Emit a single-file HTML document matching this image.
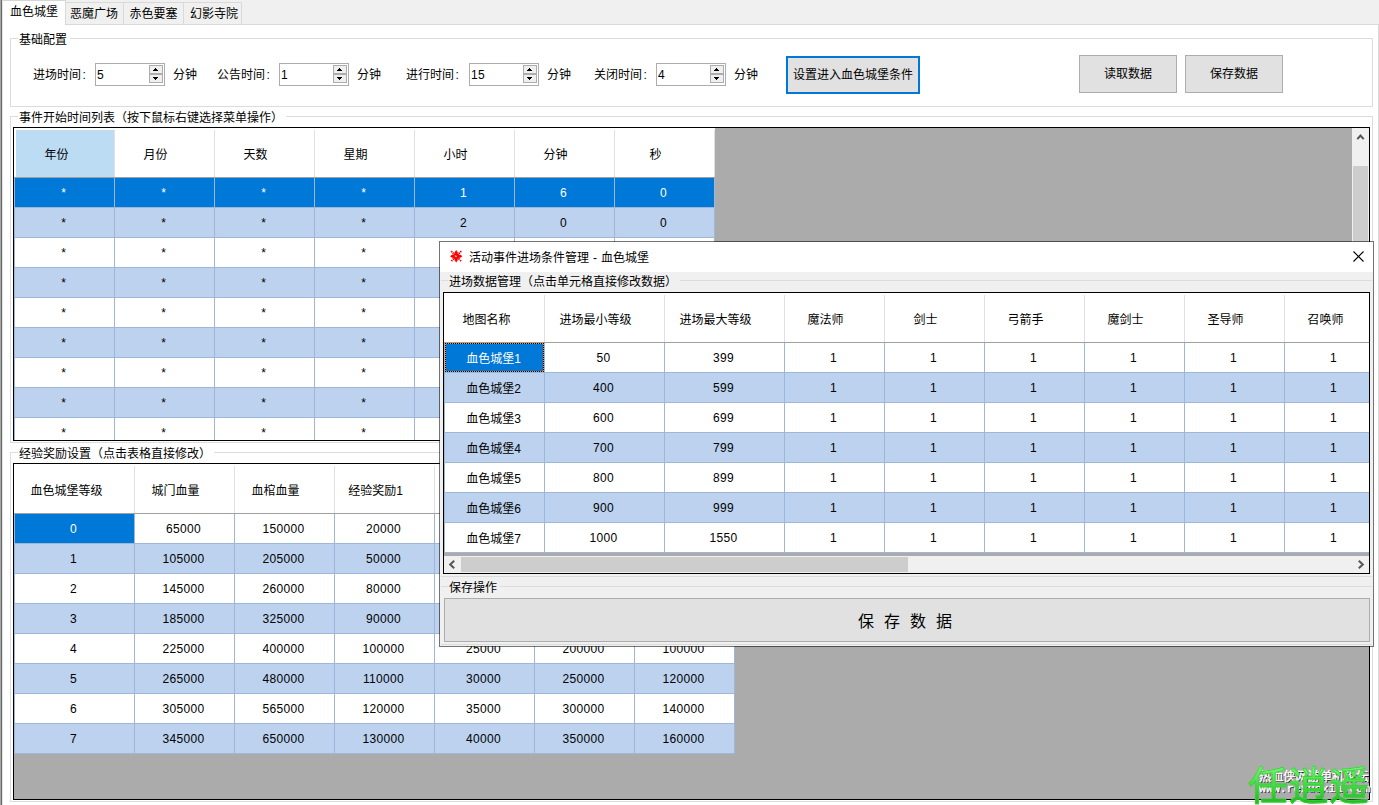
<!DOCTYPE html>
<html lang="zh-CN">
<head>
<meta charset="utf-8">
<title>活动事件配置</title>
<style>
html,body{margin:0;padding:0}
body{width:1379px;height:805px;overflow:hidden;position:relative;background:#fff;font-family:"Liberation Sans","Noto Sans CJK SC",sans-serif;font-size:12px;color:#000;line-height:16px}
.n{letter-spacing:.3px}
div,span{box-sizing:border-box}
.abs{position:absolute}
#edge0{position:absolute;left:0;top:0;width:1px;height:805px;background:#a6a6a6}
#edge1{position:absolute;left:1px;top:0;width:1px;height:805px;background:#696969}
#edge2{position:absolute;left:2px;top:0;width:1px;height:805px;background:#e3e3e3}
#strip{position:absolute;left:3px;top:0;width:1376px;height:24px;background:#f0f0f0}
#pageline{position:absolute;left:3px;top:24px;width:1376px;height:1px;background:#d9d9d9}
#pageright{position:absolute;left:1378px;top:24px;width:1px;height:781px;background:#d9d9d9}
.tab{position:absolute;top:2px;height:23px;background:#f0f0f0;border:1px solid #d9d9d9;border-right:none;text-align:left;line-height:22px;white-space:nowrap}
.tab.last{border-right:1px solid #d9d9d9}
.tab.act{top:0;height:25px;background:#fff;border:none;border-top:1px solid #d5d5d5;border-right:1px solid #d9d9d9;line-height:22px;z-index:2}
.gb{position:absolute;border:1px solid #dcdcdc}
.gbl{position:absolute;background:#fff;white-space:nowrap;height:14px;line-height:14px;padding:0 3px 0 1px}
.lbl{position:absolute;white-space:nowrap;height:16px;line-height:16px}
.cl{margin-left:1.5px}
.nud{position:absolute;top:63px;width:70px;height:23px;border:1px solid #abadb3;background:#fff}
.nud .v{position:absolute;left:1px;top:4px;line-height:14px}
.nud .sb{position:absolute;left:53px;width:14px;height:9px;background:#efefef;border:1px solid #adadad;display:block}
.nud .sb svg{position:absolute;left:3px;top:2px;display:block}
.nud .up{top:1px}
.nud .dn{top:10px}
.nud .dn svg{top:2px}
.btn{position:absolute;background:#e1e1e1;border:1px solid #adadad;text-align:center;white-space:nowrap}
.btn.foc{border:2px solid #0078d7}
.dg{position:absolute;border:1px solid #000;background:#ababab;overflow:hidden;box-sizing:content-box}
.dg .hd{position:absolute;left:0;top:0;height:49px;background:#fff}
.dg .hc{position:absolute;top:2px;height:47px;border-right:1px solid #e0e0e0;text-align:center;line-height:50px;white-space:nowrap;padding-right:18px}
.dg .hc.f{padding-right:16px}
.dg .lg{position:absolute;left:0;top:50px;width:1px;background:#a0b6d6}
.dg .hc.hb{background:none}
.dg .hc.hb::before{content:"";position:absolute;left:1px;top:0;right:0;bottom:0;background:#bcdcf4}
.dg .hc span{position:relative}
.dg .hd::after{content:"";position:absolute;left:0;right:0;bottom:-1px;height:1px;background:#a0a0a0}
.dg .rw{position:absolute;left:0;height:30px;background:#fff;border-bottom:1px solid #a0b6d6}
.dg .rw.alt{background:#bcd2ee}
.dg .rw.sel{background:#0078d7;color:#fff}
.dg .c{position:absolute;top:0;height:29px;border-right:1px solid #a0b6d6;text-align:center;line-height:30px;white-space:nowrap;padding-right:2px}
.dg .c.k{line-height:32px}
.dg .c.csel{background:#0078d7;color:#fff}
.dg .c.foc{box-shadow:inset 0 0 0 1px #ff8728}
.dg .c.foc::after{content:"";position:absolute;left:0;top:0;right:0;bottom:0;border:1px dotted #000}
</style>
</head>
<body>
<div id="edge0"></div><div id="edge1"></div><div id="edge2"></div>
<div id="strip"></div>
<div id="pageline"></div>
<div id="pageright"></div>
<div class="tab act" style="left:3px;width:63px;padding-left:7px">血色城堡</div>
<div class="tab" style="left:65px;width:59px;padding-left:4px">恶魔广场</div>
<div class="tab" style="left:123px;width:61px;padding-left:5.5px">赤色要塞</div>
<div class="tab last" style="left:183px;width:59px;padding-left:6px">幻影寺院</div>

<!-- group 1 -->
<div class="gb" style="left:10px;top:38px;width:1363px;height:69px"></div>
<div class="gbl" style="left:18px;top:33px">基础配置</div>
<div class="lbl" style="left:33px;top:67px">进场时间<span class="cl">:</span></div>
<div class="nud" style="left:95px"><span class="v n">5</span><span class="sb up"><svg width="5" height="3" viewBox="0 0 5 3" shape-rendering="crispEdges"><path d="M2 0h1v1h1v1h1v1h-5v-1h1v-1h1z" fill="#000"/></svg></span><span class="sb dn"><svg width="5" height="3" viewBox="0 0 5 3" shape-rendering="crispEdges"><path d="M0 0h5v1h-1v1h-1v1h-1v-1h-1v-1h-1z" fill="#000"/></svg></span></div>
<div class="lbl" style="left:173px;top:67px">分钟</div>
<div class="lbl" style="left:217px;top:67px">公告时间<span class="cl">:</span></div>
<div class="nud" style="left:279px"><span class="v n">1</span><span class="sb up"><svg width="5" height="3" viewBox="0 0 5 3" shape-rendering="crispEdges"><path d="M2 0h1v1h1v1h1v1h-5v-1h1v-1h1z" fill="#000"/></svg></span><span class="sb dn"><svg width="5" height="3" viewBox="0 0 5 3" shape-rendering="crispEdges"><path d="M0 0h5v1h-1v1h-1v1h-1v-1h-1v-1h-1z" fill="#000"/></svg></span></div>
<div class="lbl" style="left:357px;top:67px">分钟</div>
<div class="lbl" style="left:406px;top:67px">进行时间<span class="cl">:</span></div>
<div class="nud" style="left:469px"><span class="v n">15</span><span class="sb up"><svg width="5" height="3" viewBox="0 0 5 3" shape-rendering="crispEdges"><path d="M2 0h1v1h1v1h1v1h-5v-1h1v-1h1z" fill="#000"/></svg></span><span class="sb dn"><svg width="5" height="3" viewBox="0 0 5 3" shape-rendering="crispEdges"><path d="M0 0h5v1h-1v1h-1v1h-1v-1h-1v-1h-1z" fill="#000"/></svg></span></div>
<div class="lbl" style="left:547px;top:67px">分钟</div>
<div class="lbl" style="left:594px;top:67px">关闭时间<span class="cl">:</span></div>
<div class="nud" style="left:656px"><span class="v n">4</span><span class="sb up"><svg width="5" height="3" viewBox="0 0 5 3" shape-rendering="crispEdges"><path d="M2 0h1v1h1v1h1v1h-5v-1h1v-1h1z" fill="#000"/></svg></span><span class="sb dn"><svg width="5" height="3" viewBox="0 0 5 3" shape-rendering="crispEdges"><path d="M0 0h5v1h-1v1h-1v1h-1v-1h-1v-1h-1z" fill="#000"/></svg></span></div>
<div class="lbl" style="left:734px;top:67px">分钟</div>
<div class="btn foc" style="left:786px;top:56px;width:134px;height:38px;line-height:35px">设置进入血色城堡条件</div>
<div class="btn" style="left:1079px;top:55px;width:98px;height:38px;line-height:37px">读取数据</div>
<div class="btn" style="left:1185px;top:55px;width:98px;height:38px;line-height:37px">保存数据</div>

<!-- group 2 -->
<div class="gb" style="left:10px;top:116px;width:1363px;height:327px"></div>
<div class="gbl" style="left:18px;top:111px">事件开始时间列表（按下鼠标右键选择菜单操作）</div>
<div class="dg" id="ev" style="left:13px;top:127px;width:1355px;height:312px">
<div class="hd" style="width:701px">
<div class="hc f hb" style="left:1px;width:100px"><span>年份</span></div>
<div class="hc" style="left:101px;width:100px"><span>月份</span></div>
<div class="hc" style="left:201px;width:100px"><span>天数</span></div>
<div class="hc" style="left:301px;width:100px"><span>星期</span></div>
<div class="hc" style="left:401px;width:100px"><span>小时</span></div>
<div class="hc" style="left:501px;width:100px"><span>分钟</span></div>
<div class="hc" style="left:601px;width:100px"><span>秒</span></div>
</div>
<div class="rw sel" style="top:50px;width:701px">
<div class="c" style="left:1px;width:100px">*</div>
<div class="c" style="left:101px;width:100px">*</div>
<div class="c" style="left:201px;width:100px">*</div>
<div class="c" style="left:301px;width:100px">*</div>
<div class="c n" style="left:401px;width:100px">1</div>
<div class="c n" style="left:501px;width:100px">6</div>
<div class="c n" style="left:601px;width:100px">0</div>
</div>
<div class="rw alt" style="top:80px;width:701px">
<div class="c" style="left:1px;width:100px">*</div>
<div class="c" style="left:101px;width:100px">*</div>
<div class="c" style="left:201px;width:100px">*</div>
<div class="c" style="left:301px;width:100px">*</div>
<div class="c n" style="left:401px;width:100px">2</div>
<div class="c n" style="left:501px;width:100px">0</div>
<div class="c n" style="left:601px;width:100px">0</div>
</div>
<div class="rw" style="top:110px;width:701px">
<div class="c" style="left:1px;width:100px">*</div>
<div class="c" style="left:101px;width:100px">*</div>
<div class="c" style="left:201px;width:100px">*</div>
<div class="c" style="left:301px;width:100px">*</div>
<div class="c n" style="left:401px;width:100px">4</div>
<div class="c n" style="left:501px;width:100px">0</div>
<div class="c n" style="left:601px;width:100px">0</div>
</div>
<div class="rw alt" style="top:140px;width:701px">
<div class="c" style="left:1px;width:100px">*</div>
<div class="c" style="left:101px;width:100px">*</div>
<div class="c" style="left:201px;width:100px">*</div>
<div class="c" style="left:301px;width:100px">*</div>
<div class="c n" style="left:401px;width:100px">6</div>
<div class="c n" style="left:501px;width:100px">0</div>
<div class="c n" style="left:601px;width:100px">0</div>
</div>
<div class="rw" style="top:170px;width:701px">
<div class="c" style="left:1px;width:100px">*</div>
<div class="c" style="left:101px;width:100px">*</div>
<div class="c" style="left:201px;width:100px">*</div>
<div class="c" style="left:301px;width:100px">*</div>
<div class="c n" style="left:401px;width:100px">8</div>
<div class="c n" style="left:501px;width:100px">0</div>
<div class="c n" style="left:601px;width:100px">0</div>
</div>
<div class="rw alt" style="top:200px;width:701px">
<div class="c" style="left:1px;width:100px">*</div>
<div class="c" style="left:101px;width:100px">*</div>
<div class="c" style="left:201px;width:100px">*</div>
<div class="c" style="left:301px;width:100px">*</div>
<div class="c n" style="left:401px;width:100px">10</div>
<div class="c n" style="left:501px;width:100px">0</div>
<div class="c n" style="left:601px;width:100px">0</div>
</div>
<div class="rw" style="top:230px;width:701px">
<div class="c" style="left:1px;width:100px">*</div>
<div class="c" style="left:101px;width:100px">*</div>
<div class="c" style="left:201px;width:100px">*</div>
<div class="c" style="left:301px;width:100px">*</div>
<div class="c n" style="left:401px;width:100px">12</div>
<div class="c n" style="left:501px;width:100px">0</div>
<div class="c n" style="left:601px;width:100px">0</div>
</div>
<div class="rw alt" style="top:260px;width:701px">
<div class="c" style="left:1px;width:100px">*</div>
<div class="c" style="left:101px;width:100px">*</div>
<div class="c" style="left:201px;width:100px">*</div>
<div class="c" style="left:301px;width:100px">*</div>
<div class="c n" style="left:401px;width:100px">14</div>
<div class="c n" style="left:501px;width:100px">0</div>
<div class="c n" style="left:601px;width:100px">0</div>
</div>
<div class="rw" style="top:290px;width:701px">
<div class="c" style="left:1px;width:100px">*</div>
<div class="c" style="left:101px;width:100px">*</div>
<div class="c" style="left:201px;width:100px">*</div>
<div class="c" style="left:301px;width:100px">*</div>
<div class="c n" style="left:401px;width:100px">16</div>
<div class="c n" style="left:501px;width:100px">0</div>
<div class="c n" style="left:601px;width:100px">0</div>
</div>
<div class="lg" style="height:270px"></div>
</div>
<div id="evsb" class="abs" style="left:1352px;top:128px;width:17px;height:312px;background:#f0f0f0">
<svg class="abs" style="left:4px;top:5px" width="9" height="8" viewBox="0 0 9 8"><path d="M1.3 6.2 L4.5 2.6 L7.7 6.2" fill="none" stroke="#555" stroke-width="2"/></svg>
<div class="abs" style="left:1px;top:38px;width:15px;height:120px;background:#cdcdcd"></div>
</div>

<!-- group 3 -->
<div class="gb" style="left:10px;top:452px;width:1363px;height:350px"></div>
<div class="gbl" style="left:18px;top:447px">经验奖励设置（点击表格直接修改）</div>
<div class="dg" id="xp" style="left:13px;top:463px;width:1355px;height:335px">
<div class="hd" style="width:721px">
<div class="hc f" style="left:1px;width:120px"><span>血色城堡等级</span></div>
<div class="hc" style="left:121px;width:100px"><span>城门血量</span></div>
<div class="hc" style="left:221px;width:100px"><span>血棺血量</span></div>
<div class="hc" style="left:321px;width:100px"><span>经验奖励1</span></div>
<div class="hc" style="left:421px;width:100px"><span>经验奖励2</span></div>
<div class="hc" style="left:521px;width:100px"><span>经验奖励3</span></div>
<div class="hc" style="left:621px;width:100px"><span>经验奖励4</span></div>
</div>
<div class="rw" style="top:50px;width:721px">
<div class="c csel n" style="left:1px;width:120px">0</div>
<div class="c n" style="left:121px;width:100px">65000</div>
<div class="c n" style="left:221px;width:100px">150000</div>
<div class="c n" style="left:321px;width:100px">20000</div>
<div class="c n" style="left:421px;width:100px">5000</div>
<div class="c n" style="left:521px;width:100px">50000</div>
<div class="c n" style="left:621px;width:100px">40000</div>
</div>
<div class="rw alt" style="top:80px;width:721px">
<div class="c n" style="left:1px;width:120px">1</div>
<div class="c n" style="left:121px;width:100px">105000</div>
<div class="c n" style="left:221px;width:100px">205000</div>
<div class="c n" style="left:321px;width:100px">50000</div>
<div class="c n" style="left:421px;width:100px">10000</div>
<div class="c n" style="left:521px;width:100px">80000</div>
<div class="c n" style="left:621px;width:100px">50000</div>
</div>
<div class="rw" style="top:110px;width:721px">
<div class="c n" style="left:1px;width:120px">2</div>
<div class="c n" style="left:121px;width:100px">145000</div>
<div class="c n" style="left:221px;width:100px">260000</div>
<div class="c n" style="left:321px;width:100px">80000</div>
<div class="c n" style="left:421px;width:100px">15000</div>
<div class="c n" style="left:521px;width:100px">120000</div>
<div class="c n" style="left:621px;width:100px">60000</div>
</div>
<div class="rw alt" style="top:140px;width:721px">
<div class="c n" style="left:1px;width:120px">3</div>
<div class="c n" style="left:121px;width:100px">185000</div>
<div class="c n" style="left:221px;width:100px">325000</div>
<div class="c n" style="left:321px;width:100px">90000</div>
<div class="c n" style="left:421px;width:100px">20000</div>
<div class="c n" style="left:521px;width:100px">160000</div>
<div class="c n" style="left:621px;width:100px">80000</div>
</div>
<div class="rw" style="top:170px;width:721px">
<div class="c n" style="left:1px;width:120px">4</div>
<div class="c n" style="left:121px;width:100px">225000</div>
<div class="c n" style="left:221px;width:100px">400000</div>
<div class="c n" style="left:321px;width:100px">100000</div>
<div class="c n" style="left:421px;width:100px">25000</div>
<div class="c n" style="left:521px;width:100px">200000</div>
<div class="c n" style="left:621px;width:100px">100000</div>
</div>
<div class="rw alt" style="top:200px;width:721px">
<div class="c n" style="left:1px;width:120px">5</div>
<div class="c n" style="left:121px;width:100px">265000</div>
<div class="c n" style="left:221px;width:100px">480000</div>
<div class="c n" style="left:321px;width:100px">110000</div>
<div class="c n" style="left:421px;width:100px">30000</div>
<div class="c n" style="left:521px;width:100px">250000</div>
<div class="c n" style="left:621px;width:100px">120000</div>
</div>
<div class="rw" style="top:230px;width:721px">
<div class="c n" style="left:1px;width:120px">6</div>
<div class="c n" style="left:121px;width:100px">305000</div>
<div class="c n" style="left:221px;width:100px">565000</div>
<div class="c n" style="left:321px;width:100px">120000</div>
<div class="c n" style="left:421px;width:100px">35000</div>
<div class="c n" style="left:521px;width:100px">300000</div>
<div class="c n" style="left:621px;width:100px">140000</div>
</div>
<div class="rw alt" style="top:260px;width:721px">
<div class="c n" style="left:1px;width:120px">7</div>
<div class="c n" style="left:121px;width:100px">345000</div>
<div class="c n" style="left:221px;width:100px">650000</div>
<div class="c n" style="left:321px;width:100px">130000</div>
<div class="c n" style="left:421px;width:100px">40000</div>
<div class="c n" style="left:521px;width:100px">350000</div>
<div class="c n" style="left:621px;width:100px">160000</div>
</div>
<div class="lg" style="height:240px"></div>
</div>

<!-- watermark -->
<div class="abs" style="left:1259px;top:769px;width:112px;white-space:nowrap;color:#fff;text-shadow:1px 1px 0 #222;-webkit-text-stroke:.3px #fff;font-size:12.2px;line-height:16px">热血侠网游单机论坛</div>
<div class="abs" style="left:1259px;top:782px;white-space:nowrap;color:#fff;text-shadow:1px 1px 0 #222;-webkit-text-stroke:.3px #fff;font-family:'Liberation Mono',monospace;font-size:11.6px;line-height:14px">www.rexuexia.com</div>
<div class="abs" style="left:1248px;top:760px;white-space:nowrap;font-size:40px;line-height:52px;letter-spacing:0.5px;background:linear-gradient(#6df06d 20%,#17b417 90%);-webkit-background-clip:text;background-clip:text;color:transparent;-webkit-text-stroke:0.8px rgba(50,210,50,.9)">任逍遥</div>

<!-- dialog -->
<div id="dlg" class="abs" style="left:439px;top:241px;width:935px;height:406px;border:1px solid rgba(0,0,0,.55);background:#f0f0f0;background-clip:padding-box;overflow:hidden">
<div class="abs" style="left:0;top:0;width:933px;height:30px;background:#fff"></div>
<svg class="abs" style="left:10px;top:8px" width="13" height="13" viewBox="0 0 13 13"><path d="M1.2 1.2L11.2 11.2M11.2 1.2L1.2 11.2" stroke="#f00" stroke-width="1.9" stroke-dasharray="1.3 0.8" fill="none"/><path d="M6.2 0L7.9 2.4L6.2 5.5L4.5 2.4ZM6.2 12.6L7.9 10.1L6.2 7L4.5 10.1ZM0 6.2L2.4 4.5L5.5 6.2L2.4 7.9ZM12.4 6.2L10 4.5L7 6.2L10 7.9Z" fill="#f00"/><circle cx="6.2" cy="6.2" r="3.2" fill="#f00"/><ellipse cx="5.8" cy="6.2" rx="1.3" ry="0.8" fill="#9bb" transform="rotate(30 5.8 6.2)"/></svg>
<div class="lbl" style="left:29px;top:8px;word-spacing:.7px">活动事件进场条件管理 - 血色城堡</div>
<svg class="abs" style="left:913px;top:9px" width="11" height="11" viewBox="0 0 11 11"><path d="M0.5 0.5L10.5 10.5M10.5 0.5L0.5 10.5" stroke="#000" stroke-width="1.1" fill="none"/></svg>
<div class="abs" style="left:1px;top:38px;width:931px;height:297px;border:1px solid #dcdcdc;border-left:none;border-right:none"></div>
<div class="gbl" style="left:8px;top:33px;background:#f0f0f0">进场数据管理（点击单元格直接修改数据）</div>
<div class="dg" id="dl" style="left:3px;top:50px;width:925px;height:280px">
<div class="hd" style="width:1041px">
<div class="hc f" style="left:1px;width:100px"><span>地图名称</span></div>
<div class="hc" style="left:101px;width:120px"><span>进场最小等级</span></div>
<div class="hc" style="left:221px;width:120px"><span>进场最大等级</span></div>
<div class="hc" style="left:341px;width:100px"><span>魔法师</span></div>
<div class="hc" style="left:441px;width:100px"><span>剑士</span></div>
<div class="hc" style="left:541px;width:100px"><span>弓箭手</span></div>
<div class="hc" style="left:641px;width:100px"><span>魔剑士</span></div>
<div class="hc" style="left:741px;width:100px"><span>圣导师</span></div>
<div class="hc" style="left:841px;width:100px"><span>召唤师</span></div>
<div class="hc" style="left:941px;width:100px"><span>格斗家</span></div>
</div>
<div class="rw" style="top:50px;width:1041px">
<div class="c csel foc k" style="left:1px;width:100px">血色城堡1</div>
<div class="c n" style="left:101px;width:120px">50</div>
<div class="c n" style="left:221px;width:120px">399</div>
<div class="c n" style="left:341px;width:100px">1</div>
<div class="c n" style="left:441px;width:100px">1</div>
<div class="c n" style="left:541px;width:100px">1</div>
<div class="c n" style="left:641px;width:100px">1</div>
<div class="c n" style="left:741px;width:100px">1</div>
<div class="c n" style="left:841px;width:100px">1</div>
<div class="c n" style="left:941px;width:100px">1</div>
</div>
<div class="rw alt" style="top:80px;width:1041px">
<div class="c k" style="left:1px;width:100px">血色城堡2</div>
<div class="c n" style="left:101px;width:120px">400</div>
<div class="c n" style="left:221px;width:120px">599</div>
<div class="c n" style="left:341px;width:100px">1</div>
<div class="c n" style="left:441px;width:100px">1</div>
<div class="c n" style="left:541px;width:100px">1</div>
<div class="c n" style="left:641px;width:100px">1</div>
<div class="c n" style="left:741px;width:100px">1</div>
<div class="c n" style="left:841px;width:100px">1</div>
<div class="c n" style="left:941px;width:100px">1</div>
</div>
<div class="rw" style="top:110px;width:1041px">
<div class="c k" style="left:1px;width:100px">血色城堡3</div>
<div class="c n" style="left:101px;width:120px">600</div>
<div class="c n" style="left:221px;width:120px">699</div>
<div class="c n" style="left:341px;width:100px">1</div>
<div class="c n" style="left:441px;width:100px">1</div>
<div class="c n" style="left:541px;width:100px">1</div>
<div class="c n" style="left:641px;width:100px">1</div>
<div class="c n" style="left:741px;width:100px">1</div>
<div class="c n" style="left:841px;width:100px">1</div>
<div class="c n" style="left:941px;width:100px">1</div>
</div>
<div class="rw alt" style="top:140px;width:1041px">
<div class="c k" style="left:1px;width:100px">血色城堡4</div>
<div class="c n" style="left:101px;width:120px">700</div>
<div class="c n" style="left:221px;width:120px">799</div>
<div class="c n" style="left:341px;width:100px">1</div>
<div class="c n" style="left:441px;width:100px">1</div>
<div class="c n" style="left:541px;width:100px">1</div>
<div class="c n" style="left:641px;width:100px">1</div>
<div class="c n" style="left:741px;width:100px">1</div>
<div class="c n" style="left:841px;width:100px">1</div>
<div class="c n" style="left:941px;width:100px">1</div>
</div>
<div class="rw" style="top:170px;width:1041px">
<div class="c k" style="left:1px;width:100px">血色城堡5</div>
<div class="c n" style="left:101px;width:120px">800</div>
<div class="c n" style="left:221px;width:120px">899</div>
<div class="c n" style="left:341px;width:100px">1</div>
<div class="c n" style="left:441px;width:100px">1</div>
<div class="c n" style="left:541px;width:100px">1</div>
<div class="c n" style="left:641px;width:100px">1</div>
<div class="c n" style="left:741px;width:100px">1</div>
<div class="c n" style="left:841px;width:100px">1</div>
<div class="c n" style="left:941px;width:100px">1</div>
</div>
<div class="rw alt" style="top:200px;width:1041px">
<div class="c k" style="left:1px;width:100px">血色城堡6</div>
<div class="c n" style="left:101px;width:120px">900</div>
<div class="c n" style="left:221px;width:120px">999</div>
<div class="c n" style="left:341px;width:100px">1</div>
<div class="c n" style="left:441px;width:100px">1</div>
<div class="c n" style="left:541px;width:100px">1</div>
<div class="c n" style="left:641px;width:100px">1</div>
<div class="c n" style="left:741px;width:100px">1</div>
<div class="c n" style="left:841px;width:100px">1</div>
<div class="c n" style="left:941px;width:100px">1</div>
</div>
<div class="rw" style="top:230px;width:1041px">
<div class="c k" style="left:1px;width:100px">血色城堡7</div>
<div class="c n" style="left:101px;width:120px">1000</div>
<div class="c n" style="left:221px;width:120px">1550</div>
<div class="c n" style="left:341px;width:100px">1</div>
<div class="c n" style="left:441px;width:100px">1</div>
<div class="c n" style="left:541px;width:100px">1</div>
<div class="c n" style="left:641px;width:100px">1</div>
<div class="c n" style="left:741px;width:100px">1</div>
<div class="c n" style="left:841px;width:100px">1</div>
<div class="c n" style="left:941px;width:100px">1</div>
</div>
<div class="lg" style="height:210px"></div>
</div>
<div class="abs" style="left:4px;top:311px;width:925px;height:3px;background:#ababab"></div>
<div class="abs" style="left:4px;top:314px;width:925px;height:17px;background:#f0f0f0">
<svg class="abs" style="left:4px;top:4px" width="8" height="9" viewBox="0 0 8 9"><path d="M6.2 0.8 L2.2 4.5 L6.2 8.2" fill="none" stroke="#555" stroke-width="2"/></svg>
<svg class="abs" style="left:913px;top:4px" width="8" height="9" viewBox="0 0 8 9"><path d="M1.8 0.8 L5.8 4.5 L1.8 8.2" fill="none" stroke="#555" stroke-width="2"/></svg>
<div class="abs" style="left:17px;top:1px;width:447px;height:15px;background:#cdcdcd"></div>
</div>
<div class="abs" style="left:1px;top:344px;width:931px;height:1px;background:#dcdcdc"></div>
<div class="gbl" style="left:8px;top:339px;background:#f0f0f0">保存操作</div>
<div class="abs" style="left:1px;top:402px;width:931px;height:1px;background:#dcdcdc"></div>
<div class="btn" style="left:4px;top:356px;width:926px;height:44px;line-height:46px;font-size:16px;letter-spacing:2.8px;text-indent:-1.2px">保 存 数 据</div>
</div>
</body>
</html>
